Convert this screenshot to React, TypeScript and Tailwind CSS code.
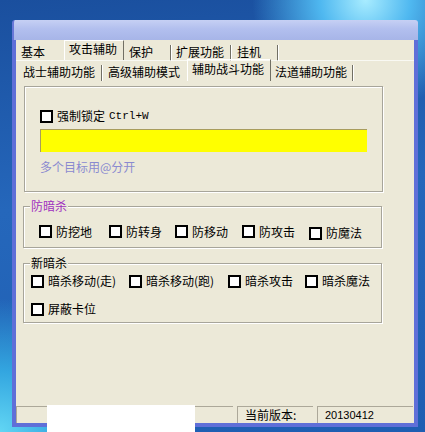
import React from 'react';

const Check: React.FC = () => (
  <span className="inline-block h-[13px] w-[13px] shrink-0 border-2 border-black bg-white" />
);

const Sep: React.FC = () => (
  <span className="ml-auto h-[16px] w-[2px] shrink-0 border-l border-r border-l-[#716f64] border-r-white" />
);

const Item: React.FC<{ label: string; className?: string }> = ({ label, className }) => (
  <div className={`flex items-center gap-[4px] ${className ?? ''}`}>
    <Check />
    <span className="whitespace-nowrap">{label}</span>
  </div>
);

export default function App() {
  return (
    <div className="relative h-[432px] w-[425px] overflow-hidden bg-[radial-gradient(circle_at_86%_0%,#a8ecff_0%,#4fb8f0_8%,transparent_20%),radial-gradient(circle_at_0%_100%,#62d6f4_0%,#33a6e0_10%,transparent_22%),linear-gradient(175deg,#1a4f9e_0%,#2567bb_45%,#1e5eb2_100%)] pl-[12px] pt-[20px] font-['Noto_Sans_CJK_SC',sans-serif] text-[12px] leading-[14px] text-black">
      <div className="flex h-[407px] w-[406px] flex-col">
        {/* title bar */}
        <div className="h-[20px] w-full rounded-t-[3px] border-l-2 border-[#6878d8] bg-[linear-gradient(180deg,#c6d0f4_0%,#b2bfee_45%,#a7b5e8_100%)]" />

        <div className="flex flex-1 flex-col bg-[#5f6fd8] px-[4px] pb-[4px]">
          <div className="flex flex-1 flex-col bg-[#ece9d8]">
            {/* tabs row 1 */}
            <div className="flex h-[20px]">
              <div className="flex h-full w-[48px] items-start pl-[5px] pt-[5px]">基本</div>
              <div className="flex h-full w-[60px] items-start border-l border-r border-t border-l-white border-t-white border-r-[#716f64] pl-[4px] pt-[1px]">攻击辅助</div>
              <div className="flex h-full w-[48px] items-start pl-[5px] pt-[5px]">
                保护
                <Sep />
              </div>
              <div className="flex h-full w-[60px] items-start pl-[4px] pt-[5px]">
                扩展功能
                <Sep />
              </div>
              <div className="flex h-full w-[47px] items-start pl-[5px] pt-[5px]">
                挂机
                <Sep />
              </div>
            </div>

            {/* tabs row 2 */}
            <div className="flex h-[20px] border-t border-white/70">
              <div className="flex h-full w-[87px] items-start pl-[7px] pt-[4px]">
                战士辅助功能
                <Sep />
              </div>
              <div className="flex h-full w-[84px] items-start pl-[5px] pt-[4px]">高级辅助模式</div>
              <div className="-mt-[2px] flex h-[22px] w-[84px] items-start border-l border-r border-t border-l-white border-t-white border-r-[#716f64] pl-[4px] pt-[2px]">
                辅助战斗功能
              </div>
              <div className="flex h-full w-[83px] items-start pl-[4px] pt-[4px]">
                法道辅助功能
                <Sep />
              </div>
            </div>

            {/* content */}
            <div className="flex flex-1 flex-col">
              <div className="ml-[8px] mt-[6px] h-[106px] w-[359px] border border-[#a7a59a] pl-[15px] pt-[22px] shadow-[inset_1px_1px_0_#ffffff,1px_1px_0_#ffffff]">
                <div className="flex items-center gap-[4px]">
                  <Check />
                  <span>强制锁定</span>
                  <span className="font-['Liberation_Mono',monospace] text-[11px]">Ctrl+W</span>
                </div>
                <div className="mt-[6px] h-[23px] w-[327px] border-l border-t border-[#a89c5c] bg-[#ffff00]" />
                <div className="mt-[8px] text-[#8a8ad0]">多个目标用@分开</div>
              </div>

              <div className="relative ml-[7px] mt-[14px] h-[42px] w-[359px] border border-[#a7a59a] shadow-[inset_1px_1px_0_#ffffff,1px_1px_0_#ffffff]">
                <span className="absolute -top-[8px] left-[6px] bg-[#ece9d8] px-[1px] text-[#a030c0]">防暗杀</span>
                <div className="flex pl-[15px] pt-[16px]">
                  <Item label="防挖地" className="w-[70px]" />
                  <Item label="防转身" className="w-[66px]" />
                  <Item label="防移动" className="w-[67px]" />
                  <Item label="防攻击" className="w-[67px]" />
                  <Item label="防魔法" className="pt-[3px]" />
                </div>
              </div>

              <div className="relative ml-[7px] mt-[15px] h-[60px] w-[359px] border border-[#a7a59a] shadow-[inset_1px_1px_0_#ffffff,1px_1px_0_#ffffff]">
                <span className="absolute -top-[8px] left-[6px] bg-[#ece9d8] px-[1px]">新暗杀</span>
                <div className="flex pl-[7px] pt-[10px]">
                  <Item label="暗杀移动(走)" className="w-[98px]" />
                  <Item label="暗杀移动(跑)" className="w-[99px]" />
                  <Item label="暗杀攻击" className="w-[77px]" />
                  <Item label="暗杀魔法" />
                </div>
                <div className="mt-[14px] flex pl-[7px]">
                  <Item label="屏蔽卡位" />
                </div>
              </div>
            </div>

            {/* status bar */}
            <div className="flex h-[17px] gap-[4px]">
              <div className="h-full w-[217px] border-l border-t border-[#aca899]" />
              <div className="flex h-full w-[76px] items-center border-l border-t border-[#aca899] pl-[7px]">当前版本:</div>
              <div className="flex h-full w-[96px] items-center border-l border-t border-[#aca899] pl-[7px] font-['Liberation_Sans',sans-serif] text-[11px]">
                20130412
              </div>
            </div>
          </div>
        </div>
      </div>

      {/* redaction block */}
      <div className="absolute left-[47px] top-[405px] h-[27px] w-[148px] bg-white" />
    </div>
  );
}
